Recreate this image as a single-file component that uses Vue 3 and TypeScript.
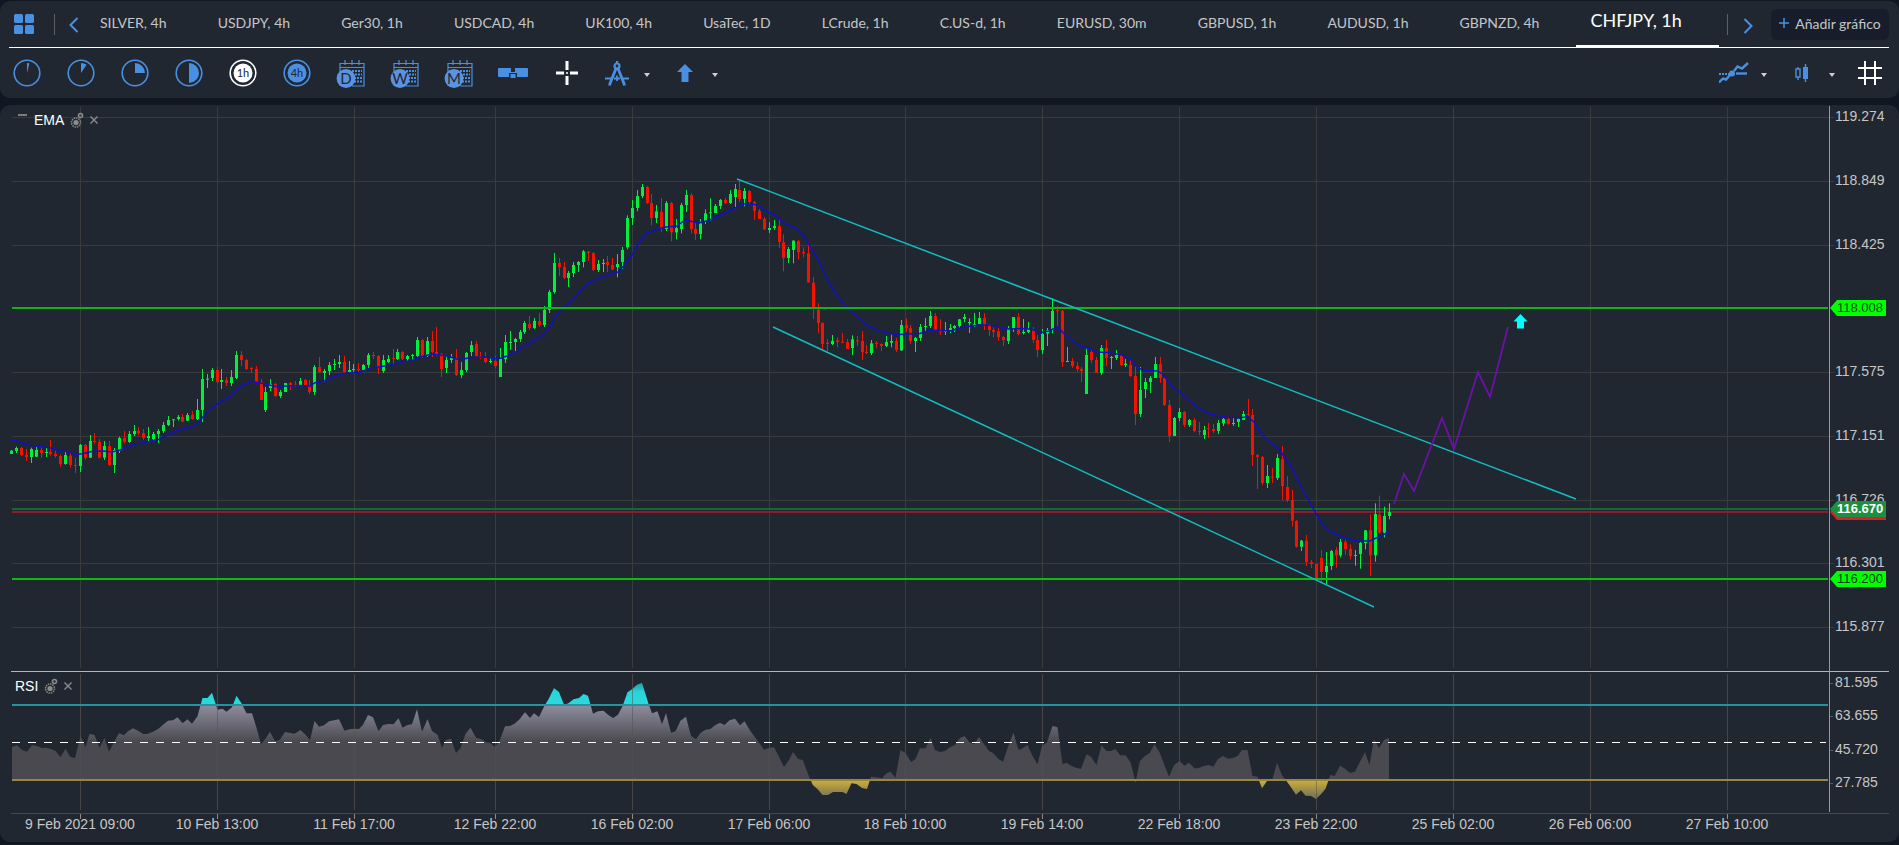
<script setup lang="ts">
type Bar = { x: number; up: boolean; high: number; top: number; bottom: number; low: number }

const tabs: string[] = [
  'SILVER, 4h', 'USDJPY, 4h', 'Ger30, 1h', 'USDCAD, 4h', 'UK100, 4h', 'UsaTec, 1D', 'LCrude, 1h',
  'C.US-d, 1h', 'EURUSD, 30m', 'GBPUSD, 1h', 'AUDUSD, 1h', 'GBPNZD, 4h', 'CHFJPY, 1h',
]
const activeTab = 'CHFJPY, 1h'

const clocks = [
  { label: '1 minuto', wedge: 'M14 14 L14 4 A10 10 0 0 1 16.4 4.3 Z' },
  { label: '5 minutos', wedge: 'M14 14 L14 4 A10 10 0 0 1 19.6 5.7 Z' },
  { label: '15 minutos', wedge: 'M14 14 L14 4 A10 10 0 0 1 24 14 Z' },
  { label: '30 minutos', wedge: 'M14 14 L14 4 A10 10 0 0 1 14 24 Z' },
]
const hours = ['1h', '4h']
const calendars = ['D', 'W', 'M']

// Candles are grouped by session; levels are thirds of a chart unit below the session base.
const sessions: { base: number; bars: string }[] = [
  {
    base: 960,
    bars: `g390 392 402 402,g380 384 393 399,r381 384 405 408,r387 405 411 423,g383 387 411 429,g380 390 410 411,r378 390 399 413,g381 396 399 411,r360 396 402 407,r392 402 408 413,
    r404 408 432 440,g396 405 432 434,r399 407 435 443,r414 435 438 459,g372 375 438 456,r372 375 413 419,g345 363 413 414,r339 363 366 372,r357 366 413 416,g363 378 413 420,
    r363 378 435 438,g384 390 435 459,g350 354 392 399,r333 354 366 371,g333 342 366 369,g315 333 342 348,r321 333 339 345,r327 339 354 360,g321 348 354 363,g336 342 357 360,
    g327 333 342 369,g306 315 333 339,g288 300 315 318,g297 298 300 321,g285 291 297 302,r282 291 305 306,g279 285 302 303,r273 285 297 300,g237 270 297 300,g147 177 270 306,
    g162 176 179 204,g144 150 174 183,r141 150 186 190,g147 180 186 207,r171 180 189 198,g150 171 189 198,g93 105 174 177,r93 105 120 138,r117 120 147 150,r141 144 147 159,
    r138 147 188 189,r177 186 240 240,g201 216 270 276,g177 192 204 213,r189 192 228 231,g210 216 228 234,g189 189 216 216,r186 189 195 210,r183 194 197 201,g174 183 195 197,
    r177 180 197 198,r180 195 216 222,g135 141 216 225,r111 141 156 159,g147 153 159 186,g126 135 153 165,g117 132 135 150,g105 126 132 144,r108 126 156 160,g123 150 156 159,
    g132 147 150 160,r129 147 150 156,g132 135 150 153,g99 105 135 144,r96 105 108 117,r105 108 141 162,g105 120 153 159,g105 117 126 129,r87 114 117 132,g87 96 117 120`,
  },
  {
    base: 720,
    bars: `r333 336 357 360,g345 348 357 363,g342 345 347 363,g291 300 348 354,r297 300 348 354,g291 303 348 351,r273 303 336 351,r261 336 342 348,r339 342 387 411,g348 360 384 399,
    g342 354 360 369,r327 354 405 408,g366 390 405 414,g336 339 390 396,g303 315 336 348,r303 312 348 351,r336 348 351 357,r336 351 366 369,g351 363 366 369,r348 363 378 384,
    g324 357 411 411,g285 306 357 369,g273 306 309 330,g294 297 306 333,g270 276 297 306,g243 249 276 282,r228 252 264 270,g234 243 264 267,r219 243 255 261,g198 210 255 261,
    g150 156 210 219,g39 69 156 161,r54 69 81 108,r66 81 114 117,g93 99 114 141,g66 75 99 111,g63 66 75 96,g30 34 66 82,r33 35 39 63,r36 39 90 93,
    g60 72 90 96,g57 69 72 96,r48 66 75 96,r54 75 88 90,g42 72 81 112,g21 30 66 87`,
  },
  {
    base: 510,
    bars: `g136 144 232 238,g90 114 144 165,g60 78 114 124,g42 51 78 84,r48 51 99 102,r72 99 144 166,g105 124 144 159,r84 126 174 187,g93 99 177 183,r96 99 187 214,
    g147 174 187 208,g99 105 177 190,g60 75 105 126,r69 75 177 190,r157 177 192 210,g147 160 192 208,g118 130 154 162,g85 127 130 153,g102 108 129 129,g87 90 108 117,
    r84 90 99 102,g60 72 99 102,g42 57 81 115,r33 60 87 96,g54 63 87 109,r60 63 96 105,r93 96 122 150,r117 123 147 147,r141 147 178 180,g157 174 180 189,
    g150 168 174 180,r147 168 216 234,r193 217 264 304,g231 237 264 279,g211 212 240 280,r210 213 247 268,r232 246 250 262,r216 250 337 338,r321 338 415 447,r400 420 459 490,
    r457 459 522 540,r507 518 522 543,g495 513 522 525,r502 511 516 532,r489 515 518 519,r507 516 537 537,g496 508 534 555,r498 511 514 528`,
  },
  {
    base: 840,
    bars: `r153 183 216 240,r195 216 219 222,g180 190 219 225,r183 189 192 204,r190 192 198 213,g168 186 198 201,g160 183 188 202,r174 183 210 216,g120 135 211 213,r115 135 144 156,
    r135 144 183 192,g171 174 183 216,g132 141 174 183,g114 138 141 153,g93 108 138 144,r99 108 150 153,r118 150 156 165,g126 153 156 165,g132 144 150 159,g135 138 144 156,
    g117 118 138 147,g102 111 117 127,g115 126 129 159,g99 132 135 141,g96 114 132 135,r99 114 135 150,r132 135 150 168,r142 150 156 172,r144 154 171 183,r168 171 180 198,
    g138 145 183 192,g111 111 145 156,r99 111 162 166,g117 156 159 163,g126 147 156 159,r141 150 180 189,r165 180 210 231,g147 162 210 222,g144 150 160 198,g54 93 150 160,
    r78 90 93 138,r90 93 246 261,g201 243 246 246,r234 243 258 264,r246 258 267 276,r261 267 273 306,g204 225 342 342,r209 216 240 249,r231 240 279 279,g195 204 279 285,
    r180 204 234 258,g228 231 234 267,g210 225 234 240,r222 225 255 258,g237 251 255 261,r240 255 288 291,r258 288 402 435,g261 330 402 411,g294 306 327 354,g288 294 306 339,
    g231 252 294 294,r231 252 294 309,r291 294 375 378,r360 375 468 486,g411 414 468 468,g384 396 414 423,r393 396 435 441,g417 420 435 441,r414 420 453 456,r426 453 456 465,
    g438 450 465 477,r429 444 447 474,r432 447 453 459,g420 429 453 462,g414 417 430 438,r412 417 432 435,g411 429 432 438,g414 417 426 441,g393 402 420 420`,
  },
  {
    base: 1140,
    bars: `r57 102 105 108,r87 105 225 258,r222 225 231 327,r228 231 309 315,g255 288 309 324,r264 290 293 309,g222 234 294 300,r198 237 318 360,r288 321 360 366,r330 360 422 440,
    r420 423 500 503,g480 482 500 513,r465 482 546 558,r540 546 552 564,r552 552 594 597,r510 534 576 606,g516 558 576 612,g510 513 558 570,r501 510 526 563,g477 486 526 532,
    r479 486 507 525,r493 507 528 538,g510 525 528 557,g486 489 522 566,g450 451 489 508,r404 450 526 588,g370 402 526 545,r347 404 458 460,g380 408 458 472,g370 396 408 418`,
  },
]

const barStep = 4.886
const bars: Bar[] = sessions
  .flatMap(({ base, bars }) =>
    bars.split(',').map((entry) => {
      const text = entry.trim()
      const [high, top, bottom, low] = text.slice(1).split(' ').map((v) => (base + Number(v)) / 3)
      return { up: text[0] === 'g', high, top, bottom, low }
    }),
  )
  .map((bar, i) => ({ ...bar, x: Math.floor(11.9 + i * barStep) }))

const ema = `12,440.5 17,441 27,445 40,446.5 51,448 62,451 67,451.5 75,454.7 82,453.7 93,451.3 103,451 112,452 120,450 130,446 134,444 148,442 160,439 170,433.7 178,430.3 193,426 198,423 204,415.5 213,406.5 227,398 231,395.3 236,390.3 241,386 252,381.3 265,384 276,386.5 300,385.5 310,386 315,382.7 324,381 340,374 348,373 360,372.3 370,368 380,366.7 391,365 403,361.5 411,361 418,357.5 432,354 440,355 447,356 460,360 470,357.5 485,357 498,359 507,356 516,352 525,345.5 534,340 541,336.5 549,328 557,314 565,307 575,297 582,289 588,283 594,280.5 607,275 618,272 624,265.5 632,255 637,246 642,238 647,233 656,229.5 666,227 677,226 685,220 699,223 710,220 720,215 733,209 743,204 753,204 759,206 768,212 776,215.5 784,223 797,229 803,234.5 808,243 819,261 828,281 836,294 844,304.5 848,309 859,318 868,326 880,331 896,335 905,334 920,333.5 930,330.3 950,331 962,327.5 972,326 980,324.7 993,325.5 1005,329 1025,328.5 1032,329.5 1040,332.5 1049,331 1054,328.5 1058,327 1063,332.5 1069,338.5 1080,346 1090,349 1097,352 1108,352.5 1120,354.5 1129,358 1133,362 1137,367.5 1144,370.5 1158,371 1163,374.5 1170,384 1176,389.5 1181,393 1190,401 1200,409 1210,414 1225,417 1240,418 1247,416.5 1254,422 1258,428 1262,435 1272,444 1279,448.5 1284,456.5 1291,466.5 1297,478.5 1303,490 1310,502.5 1316,513.5 1321,522 1328,530 1335,534 1345,537.5 1355,541 1370,541 1377,537.5 1389,532`

const rsi = `13,746.7 17,745.3 22,750 27,751.7 32,745.3 37,746 42,748 46.5,747.7 51.5,749.3 55.5,751 60.5,757.3 65.5,748.7 70,756.7 75,758 80.5,736.3 85.5,747.3 89.5,734 94.5,735 99.5,747.7 104.5,738 109,751.7 114.5,741.3 119,733.3 124,735.3 128,731.3 133,728.3 138,730.7 143.5,734.3 148,733.7 153,731.7 158.5,728.7 163,724.7 168,720.7 173,720.3 177.5,717.3 182.5,723.3 187.5,719.3 192,723.7 197.5,716.3 202.5,698 207.5,698 212,692.7 217.5,709.7 222.5,708.7 226.5,711.7 232,707.3 236.5,695.7 241.5,703.3 246.5,713.3 252,713.3 256.5,727.7 261,744 265.5,738.7 270,732 275,741.3 280,739.7 285,732 294.5,733.7 300.5,730 305.5,734.7 310,740.3 314.5,721 319,726.7 324,725.3 329,721.3 339,719.3 344.5,730.7 349.5,729.3 354.5,728.7 359,729 363,724.7 368,715 373,717.3 378.5,731.3 383,725 388.5,724 393.5,724.3 398.5,718.3 402.5,727.7 407.5,725 412,724.3 417,709.3 422,731.7 427.5,719.3 432,731 437.5,734.7 442,747.7 446,740 451,738.7 456,753 460.5,748 465.5,734 470.5,727.7 476,737.7 481.5,739.3 486.5,742.3 490,742.7 495,747 500,739.7 505,726.3 510,726 514.5,723.7 519.5,719.3 525,712.3 530,718 534,713.3 539,717 544,706.7 548.5,699.3 554,688 559,692 564,704.7 568.5,703.3 573.5,699.3 579,698 583.5,694 588,695.7 593,713.7 598,711.3 603.5,710.7 608,714.7 613,718 618,714.7 622.5,706.3 627.5,692.3 632.5,688.7 637,684.7 642,682.7 648.5,703.7 652,713.3 657.5,711.3 662,724.3 666,713.3 671,732.7 675.5,731.3 680.5,720.7 686,716.7 691,736 696,739.3 700.5,733 705.5,729.7 710.5,729 715,725.3 720,722.7 724.5,725 729.5,720.3 735,718.7 740,725.3 744.5,721.3 751,732 759.5,743.3 764,749.7 769,748 774,747 784,767 789,760 793,752 798,758.7 803,760.3 808,774 810.5,780 813,785.3 817.5,789 822.5,795 828,795 833,792 842.5,792 846.5,794 851.5,783.3 856.5,784 862,788 867,789 871,776.7 876,777.3 882,778.3 886.5,773.3 890.5,771.7 895.5,777.7 900.5,750 905.5,753 911,762 915.5,759 920,748.3 925.5,748.3 930.5,738 935,750 940,752 945,751 950,747.3 955,745 960,738 964.5,736.3 969,741.7 974,744.3 979,737 984,744 989,751 993,753 998.5,759 1003,761.7 1008.5,745.3 1013.5,733 1018.5,750 1023,748 1027.5,745 1032.5,756 1037.5,764.3 1042,746 1047,742.3 1052.5,726 1057.5,727.3 1062.5,764.3 1066.5,762.7 1071,765.7 1076,767.7 1081,769 1086.5,754.3 1091,756.7 1096.5,765 1101.5,745.3 1106.5,751 1111,751 1115.5,749 1120,755.3 1125.5,755.3 1130.5,762.3 1135.5,782.3 1140,761 1144.5,756.3 1149.5,753.3 1154.5,744.3 1159.5,752.3 1169,776.7 1174,765.3 1179.5,761 1184.5,765.7 1189,762.7 1194.5,768.3 1198.5,768.3 1203.5,766 1209,765 1213.5,766.7 1218,759 1223,756 1228,758.7 1233,758 1238,755.7 1242,750 1247.5,750 1252.5,776 1257.5,776.7 1262,788.3 1267,781 1272,780.7 1277,762.7 1282,775.3 1286.5,781 1291.5,788 1296,794.7 1301,790.3 1305.5,795.7 1311,796 1316,799 1321,794.3 1325.5,788.7 1330.5,774.7 1334.5,776.3 1340,765.7 1345,768.7 1350,773 1355,771.7 1360,761.7 1365,752.3 1369.5,765 1374,739.3 1379,748 1384,740 1389,738`

const priceTicks = [
  { y: 117, text: '119.274' }, { y: 181, text: '118.849' }, { y: 245, text: '118.425' },
  { y: 372, text: '117.575' }, { y: 436, text: '117.151' }, { y: 500, text: '116.726' },
  { y: 563, text: '116.301' }, { y: 627, text: '115.877' },
]
const rsiTicks = [
  { y: 683, text: '81.595' }, { y: 716, text: '63.655' }, { y: 750, text: '45.720' }, { y: 783, text: '27.785' },
]
const dates = [
  { x: 80, text: '9 Feb 2021 09:00' }, { x: 217, text: '10 Feb 13:00' }, { x: 354, text: '11 Feb 17:00' },
  { x: 495, text: '12 Feb 22:00' }, { x: 632, text: '16 Feb 02:00' }, { x: 769, text: '17 Feb 06:00' },
  { x: 905, text: '18 Feb 10:00' }, { x: 1042, text: '19 Feb 14:00' }, { x: 1179, text: '22 Feb 18:00' },
  { x: 1316, text: '23 Feb 22:00' }, { x: 1453, text: '25 Feb 02:00' }, { x: 1590, text: '26 Feb 06:00' },
  { x: 1727, text: '27 Feb 10:00' },
]
const tags = [
  { y: 308, text: '118.008', kind: 'level' },
  { y: 579, text: '116.200', kind: 'level' },
  { y: 512, text: '', kind: 'ask' },
  { y: 509, text: '116.670', kind: 'bid' },
]
const studies = [
  { name: 'EMA', place: 'on-price' },
  { name: 'RSI', place: 'on-rsi' },
]
</script>

<template>
  <main class="terminal">
    <header class="panel">
      <div class="tabbar">
        <button class="icon-btn layout" aria-label="Disposición">
          <svg width="21" height="21" viewBox="0 0 21 21" class="fill">
            <rect width="9" height="9" rx="1.5" /><rect x="11" width="9" height="9" rx="1.5" />
            <rect y="11" width="9" height="9" rx="1.5" /><rect x="11" y="11" width="9" height="9" rx="1.5" />
          </svg>
        </button>
        <span class="divider"></span>
        <button class="icon-btn prev" aria-label="Anterior">
          <svg width="10" height="16" viewBox="0 0 10 16" class="line"><path d="M8.5 1 L1.5 8 L8.5 15" stroke-width="2" /></svg>
        </button>
        <nav class="tabs" role="tablist">
          <button v-for="t in tabs" :key="t" role="tab" :aria-selected="t === activeTab" class="tab" :class="{ active: t === activeTab }">{{ t }}</button>
        </nav>
        <span class="divider end"></span>
        <button class="icon-btn next" aria-label="Siguiente">
          <svg width="10" height="16" viewBox="0 0 10 16" class="line"><path d="M1.5 1 L8.5 8 L1.5 15" stroke-width="2" /></svg>
        </button>
        <button class="add"><svg width="10" height="10" viewBox="0 0 10 10" class="line"><path d="M5 0 V10 M0 5 H10" stroke-width="1.5" /></svg>Añadir gráfico</button>
      </div>

      <div class="toolbar">
        <button v-for="c in clocks" :key="c.label" class="tool" :aria-label="c.label">
          <svg width="28" height="28" viewBox="0 0 28 28"><circle cx="14" cy="14" r="12.8" class="line" stroke-width="1.6" /><path :d="c.wedge" class="fill" /></svg>
        </button>
        <button v-for="h in hours" :key="h" class="tool" :class="{ chosen: h === '1h' }">
          <svg width="28" height="28" viewBox="0 0 28 28">
            <circle cx="14" cy="14" r="12.8" class="line" stroke-width="1.6" /><circle cx="14" cy="14" r="9.5" class="fill" />
            <text x="14" y="18" class="hour">{{ h }}</text>
          </svg>
        </button>
        <button v-for="c in calendars" :key="c" class="tool">
          <svg width="30" height="30" viewBox="0 0 30 30">
            <path d="M4 15 V5.5 H28 V28 H16 M4 9.5 H28 M9 2 V7 M16 2 V7 M23 2 V7" class="line" stroke-width="1.2" />
            <path d="M16 13 H26 M16 16.500 H26 M18 20 H26 M18 23.500 H26" class="line" stroke-width="2" stroke-dasharray="2 1" />
            <circle cx="10" cy="20.500" r="9.400" class="disc" /><text x="10" y="26" class="letter">{{ c }}</text>
          </svg>
        </button>
        <button class="tool" aria-label="Compactar">
          <svg width="30" height="10" viewBox="0 0 30 10" class="fill"><path d="M1 0 H13 V4 H17 V0 H29 Q30 0 30 1 V8 Q30 9 29 9 H19 V5 H11 V9 H1 Q0 9 0 8 V1 Q0 0 1 0 Z" /><rect x="12.500" y="6" width="5" height="4" /></svg>
        </button>
        <button class="tool chosen" aria-label="Cursor">
          <svg width="24" height="24" viewBox="0 0 24 24" class="line"><path d="M12 0 V9 M12 15 V24 M1 12 H9 M15 12 H23" stroke-width="3" /><path d="M11 12 H13" stroke-width="1.500" /></svg>
        </button>
        <button class="tool slim" aria-label="Dibujo">
          <svg width="24" height="26" viewBox="0 0 24 26" class="line">
            <circle cx="12" cy="6" r="2.500" stroke-width="2.200" /><path d="M12 1 V3" stroke-width="2.200" />
            <path d="M11 8.500 L5 23.500 L4.500 25.500 M13 8.500 L19 23.500 L19.500 25.500" stroke-width="2.800" />
            <path d="M0 18.500 H7 M9 18.500 H15 M17 18.500 H24 M12 15.500 V21" stroke-width="1.800" />
          </svg>
        </button>
        <button class="caret" aria-label="Más dibujos"></button>
        <button class="tool slim gap" aria-label="Flecha">
          <svg width="16" height="18" viewBox="0 0 16 18" class="fill"><path d="M8 0 L16 8 H11.500 V18 H4.500 V8 H0 Z" /></svg>
        </button>
        <button class="caret" aria-label="Más flechas"></button>
        <span class="spacer"></span>
        <button class="tool slim" aria-label="Indicadores">
          <svg width="30" height="22" viewBox="0 0 30 22" class="line">
            <path d="M0 20.500 L4 16.500 L7 17.500 L11 13 M15 9 L18.500 4.500 L23 6.500 L29 1" stroke-width="2.400" />
            <path d="M0 12 H10" stroke-width="2" stroke-dasharray="2 1" /><path d="M17 11.500 H28" stroke-width="2.400" /><circle cx="13" cy="11.500" r="3" class="fill" />
          </svg>
        </button>
        <button class="caret" aria-label="Más indicadores"></button>
        <button class="tool slim gap" aria-label="Tipo de gráfico">
          <svg width="14" height="18" viewBox="0 0 14 18"><path d="M3 3 V5 M3 13 V16 M1 5 H5 V13 H1 Z M10.500 0 V18" class="line" stroke-width="1.400" /><rect x="8" y="3" width="5" height="12" class="fill" /></svg>
        </button>
        <button class="caret" aria-label="Más tipos"></button>
        <button class="tool slim gap chosen" aria-label="Cuadrícula">
          <svg width="24" height="24" viewBox="0 0 24 24" class="line"><path d="M7 0 V24 M17 0 V24 M0 7 H24 M0 17 H24" stroke-width="2" /></svg>
        </button>
      </div>
    </header>

    <section class="panel chart">
      <svg class="plot" viewBox="0 105 1899 737" role="img" aria-label="CHFJPY, 1h">
        <defs>
          <linearGradient id="rsiFill" gradientUnits="userSpaceOnUse" x1="0" y1="680" x2="0" y2="800">
            <stop offset="0" stop-color="#1f8892" /><stop offset="0.1" stop-color="#2ad4d8" />
            <stop offset="0.208" stop-color="#2adade" /><stop offset="0.208" stop-color="#8f8d9e" />
            <stop offset="0.52" stop-color="#49494f" /><stop offset="0.833" stop-color="#49494f" />
            <stop offset="0.833" stop-color="#d0af38" /><stop offset="0.98" stop-color="#747158" />
          </linearGradient>
        </defs>

        <g class="grid">
          <path v-for="t in priceTicks" :key="t.text" :d="`M12 ${t.y + 0.5} H1834`" />
          <path v-for="d in dates" :key="d.text" :d="`M${d.x + 0.5} 107 V668 M${d.x + 0.5} 674 V810`" />
        </g>

        <polygon :points="`12,780 12,747 ${rsi} 1389,780`" fill="url(#rsiFill)" />
        <g class="grid over"><path v-for="d in dates" :key="d.text" :d="`M${d.x + 0.5} 674 V810`" /></g>
        <path d="M12 705 H1828" stroke="#2592a1" stroke-width="2" />
        <path d="M12 742.500 H1826" stroke="#fff" stroke-dasharray="8 8" />
        <path d="M12 780 H1828" stroke="#9a8640" stroke-width="2" />

        <path d="M12 509 H1828" stroke="#1d6336" stroke-width="2" />
        <path d="M12 512 H1828" stroke="#8f1c2c" stroke-width="2" />

        <g v-for="b in bars" :key="b.x" :class="b.up ? 'up' : 'down'">
          <rect :x="b.x" :y="b.high" width="1" :height="b.low - b.high" />
          <rect :x="b.x - 1" :y="b.top" width="3" :height="Math.max(1, b.bottom - b.top)" />
        </g>

        <polyline :points="ema" fill="none" stroke="#1010c4" stroke-width="1.500" />
        <path d="M12 308 H1828" stroke="#14b018" stroke-width="2" />
        <path d="M12 579 H1828" stroke="#08c00a" stroke-width="2" />
        <path d="M737 179 L1576 499 M773 327 L1374 607" stroke="#12bcc2" stroke-width="1.500" fill="none" />
        <polyline points="1394,504 1404,474 1414,491 1442,418 1454,449 1478,372 1490,397 1508,327" fill="none" stroke="#6a12a6" stroke-width="1.800" />
        <path d="M1520.500 314 L1527.500 321.500 H1524 V328.500 H1517 V321.500 H1513.500 Z" fill="#00ffff" />

        <path d="M11 671.500 H1889" stroke="#b4b4bb" />
        <path d="M1829.500 106 V812" stroke="#96989c" />
        <path d="M11 813.500 H1889" stroke="#424850" />
        <path v-for="d in dates" :key="d.text" :d="`M${d.x + 0.5} 814 V819`" stroke="#8a8a8a" />
        <path v-for="t in rsiTicks" :key="t.text" :d="`M1830 ${t.y + 0.5} H1833`" stroke="#55585c" />

        <text v-for="t in [...priceTicks, ...rsiTicks]" :key="t.text" x="1835" :y="t.y + 4" class="axis">{{ t.text }}</text>
        <text v-for="d in dates" :key="d.text" :x="d.x" y="829" class="axis middle">{{ d.text }}</text>
        <g v-for="t in tags" :key="t.y" :class="['tag', t.kind]">
          <path :d="`M1830 ${t.y} L1837 ${t.y - 8} H1886 V${t.y + 8} H1837 Z`" />
          <text x="1837" :y="t.y + 4">{{ t.text }}</text>
        </g>
      </svg>

      <div v-for="s in studies" :key="s.name" class="study" :class="s.place">
        <button v-if="s.name === 'EMA'" class="fold" aria-label="Plegar"></button>
        <span>{{ s.name }}</span>
        <button class="mini" :aria-label="`Ajustes ${s.name}`">
          <svg width="14" height="16" viewBox="0 0 14 16">
            <circle cx="6" cy="10.500" r="4.500" fill="none" stroke="#858585" stroke-width="1.600" stroke-dasharray="1.500 0.800" /><circle cx="6" cy="10.500" r="2.600" fill="#8c8c8c" />
            <circle cx="10.500" cy="3.500" r="2" fill="none" stroke="#8c8c8c" stroke-width="1.600" />
          </svg>
        </button>
        <button class="mini" :aria-label="`Cerrar ${s.name}`">
          <svg width="8" height="8" viewBox="0 0 8 8"><path d="M0.500 0.500 L7.500 7.500 M7.500 0.500 L0.500 7.500" stroke="#8c8c8c" stroke-width="1.400" /></svg>
        </button>
      </div>
    </section>
  </main>
</template>

<style>
html,
body {
  background: #111722;
}
</style>

<style scoped>
.terminal {
  display: flex;
  flex-direction: column;
  gap: 7px;
  padding: 1px 0 3px;
  font-family: Lato, 'Open Sans', sans-serif;
  color: #c4c6c9;
}
.panel {
  background: #212730;
  border-radius: 10px;
}
button {
  border: 0;
  padding: 0;
  background: none;
  color: inherit;
  font: inherit;
  cursor: pointer;
}
svg {
  display: block;
}
.fill {
  fill: #4a90e2;
}
.line {
  fill: none;
  stroke: #4a90e2;
}
circle.fill {
  stroke: none;
}
.chosen .fill {
  fill: #fff;
}
.chosen .line,
.chosen.line {
  stroke: #fff;
}
.tabbar {
  display: flex;
  align-items: center;
  height: 46px;
  margin: 0 10px 0 9px;
  border-bottom: 1px solid #fff;
}
.layout {
  margin-left: 5px;
}
.divider {
  width: 1px;
  height: 21px;
  margin-left: 19px;
  background: #5b6062;
}
.divider.end {
  margin-left: 8px;
}
.prev {
  margin: 2px 7px 0 14px;
}
.next {
  margin: 4px 18px 0 15px;
}
.tabs {
  display: flex;
  flex: 1;
  align-self: stretch;
  justify-content: space-between;
}
.tab {
  padding: 0 37px 5px 14px;
  height: 47px;
  font-size: 14px;
  white-space: nowrap;
}
.tab.active {
  padding-bottom: 6px;
  border-bottom: 3px solid #fff;
  font-size: 18px;
  color: #fff;
}
.add {
  display: flex;
  flex: none;
  align-items: center;
  justify-content: center;
  gap: 6px;
  width: 118px;
  height: 31px;
  padding-bottom: 2px;
  border-radius: 6px;
  background: #171d2a;
  font-size: 14px;
  white-space: nowrap;
}
.toolbar {
  display: flex;
  align-items: center;
  height: 50px;
  padding-right: 6px;
}
.tool {
  display: flex;
  align-items: center;
  justify-content: center;
  width: 54px;
  height: 40px;
}
.tool.slim {
  width: 46px;
}
.gap {
  margin-left: 8px;
}
.spacer {
  flex: 1;
}
.caret {
  width: 14px;
  height: 20px;
}
.caret::before {
  content: '';
  display: block;
  margin: 4px auto 0;
  width: 0;
  border: 3px solid transparent;
  border-top: 4px solid #d0d0d0;
  border-bottom: 0;
}
.hour {
  font-size: 11px;
  fill: #212730;
  text-anchor: middle;
}
.letter {
  font-size: 15px;
  fill: #212730;
  text-anchor: middle;
}
.disc {
  fill: #5b93e0;
}
.chart {
  position: relative;
}
.plot {
  width: 100%;
  height: auto;
}
.grid path {
  stroke: #3a3b3c;
}
.grid.over path {
  stroke: #56524f;
  opacity: 0.5;
}
.up {
  fill: #00f03c;
}
.down {
  fill: #f51300;
}
.axis,
.tag text,
.study {
  font-family: 'Liberation Sans', Arial, sans-serif;
}
.axis {
  font-size: 14px;
  fill: #c6c6c6;
}
.middle {
  text-anchor: middle;
}
.tag text {
  font-size: 13px;
  fill: #123c16;
}
.level path {
  fill: #00ff00;
}
.ask path {
  fill: #d91f2b;
}
.bid path {
  fill: #1c8f40;
}
.tag.bid text {
  fill: #fff;
  font-weight: bold;
}
.study {
  position: absolute;
  display: flex;
  align-items: center;
  gap: 6px;
  height: 18px;
  font-size: 14px;
  color: #fff;
}
.on-price {
  top: 6px;
  left: 18px;
}
.on-rsi {
  top: 572px;
  left: 15px;
}
.fold {
  align-self: flex-start;
  width: 9px;
  height: 2px;
  margin: 3px 1px 0 0;
  background: #7c7c7c;
}
</style>
